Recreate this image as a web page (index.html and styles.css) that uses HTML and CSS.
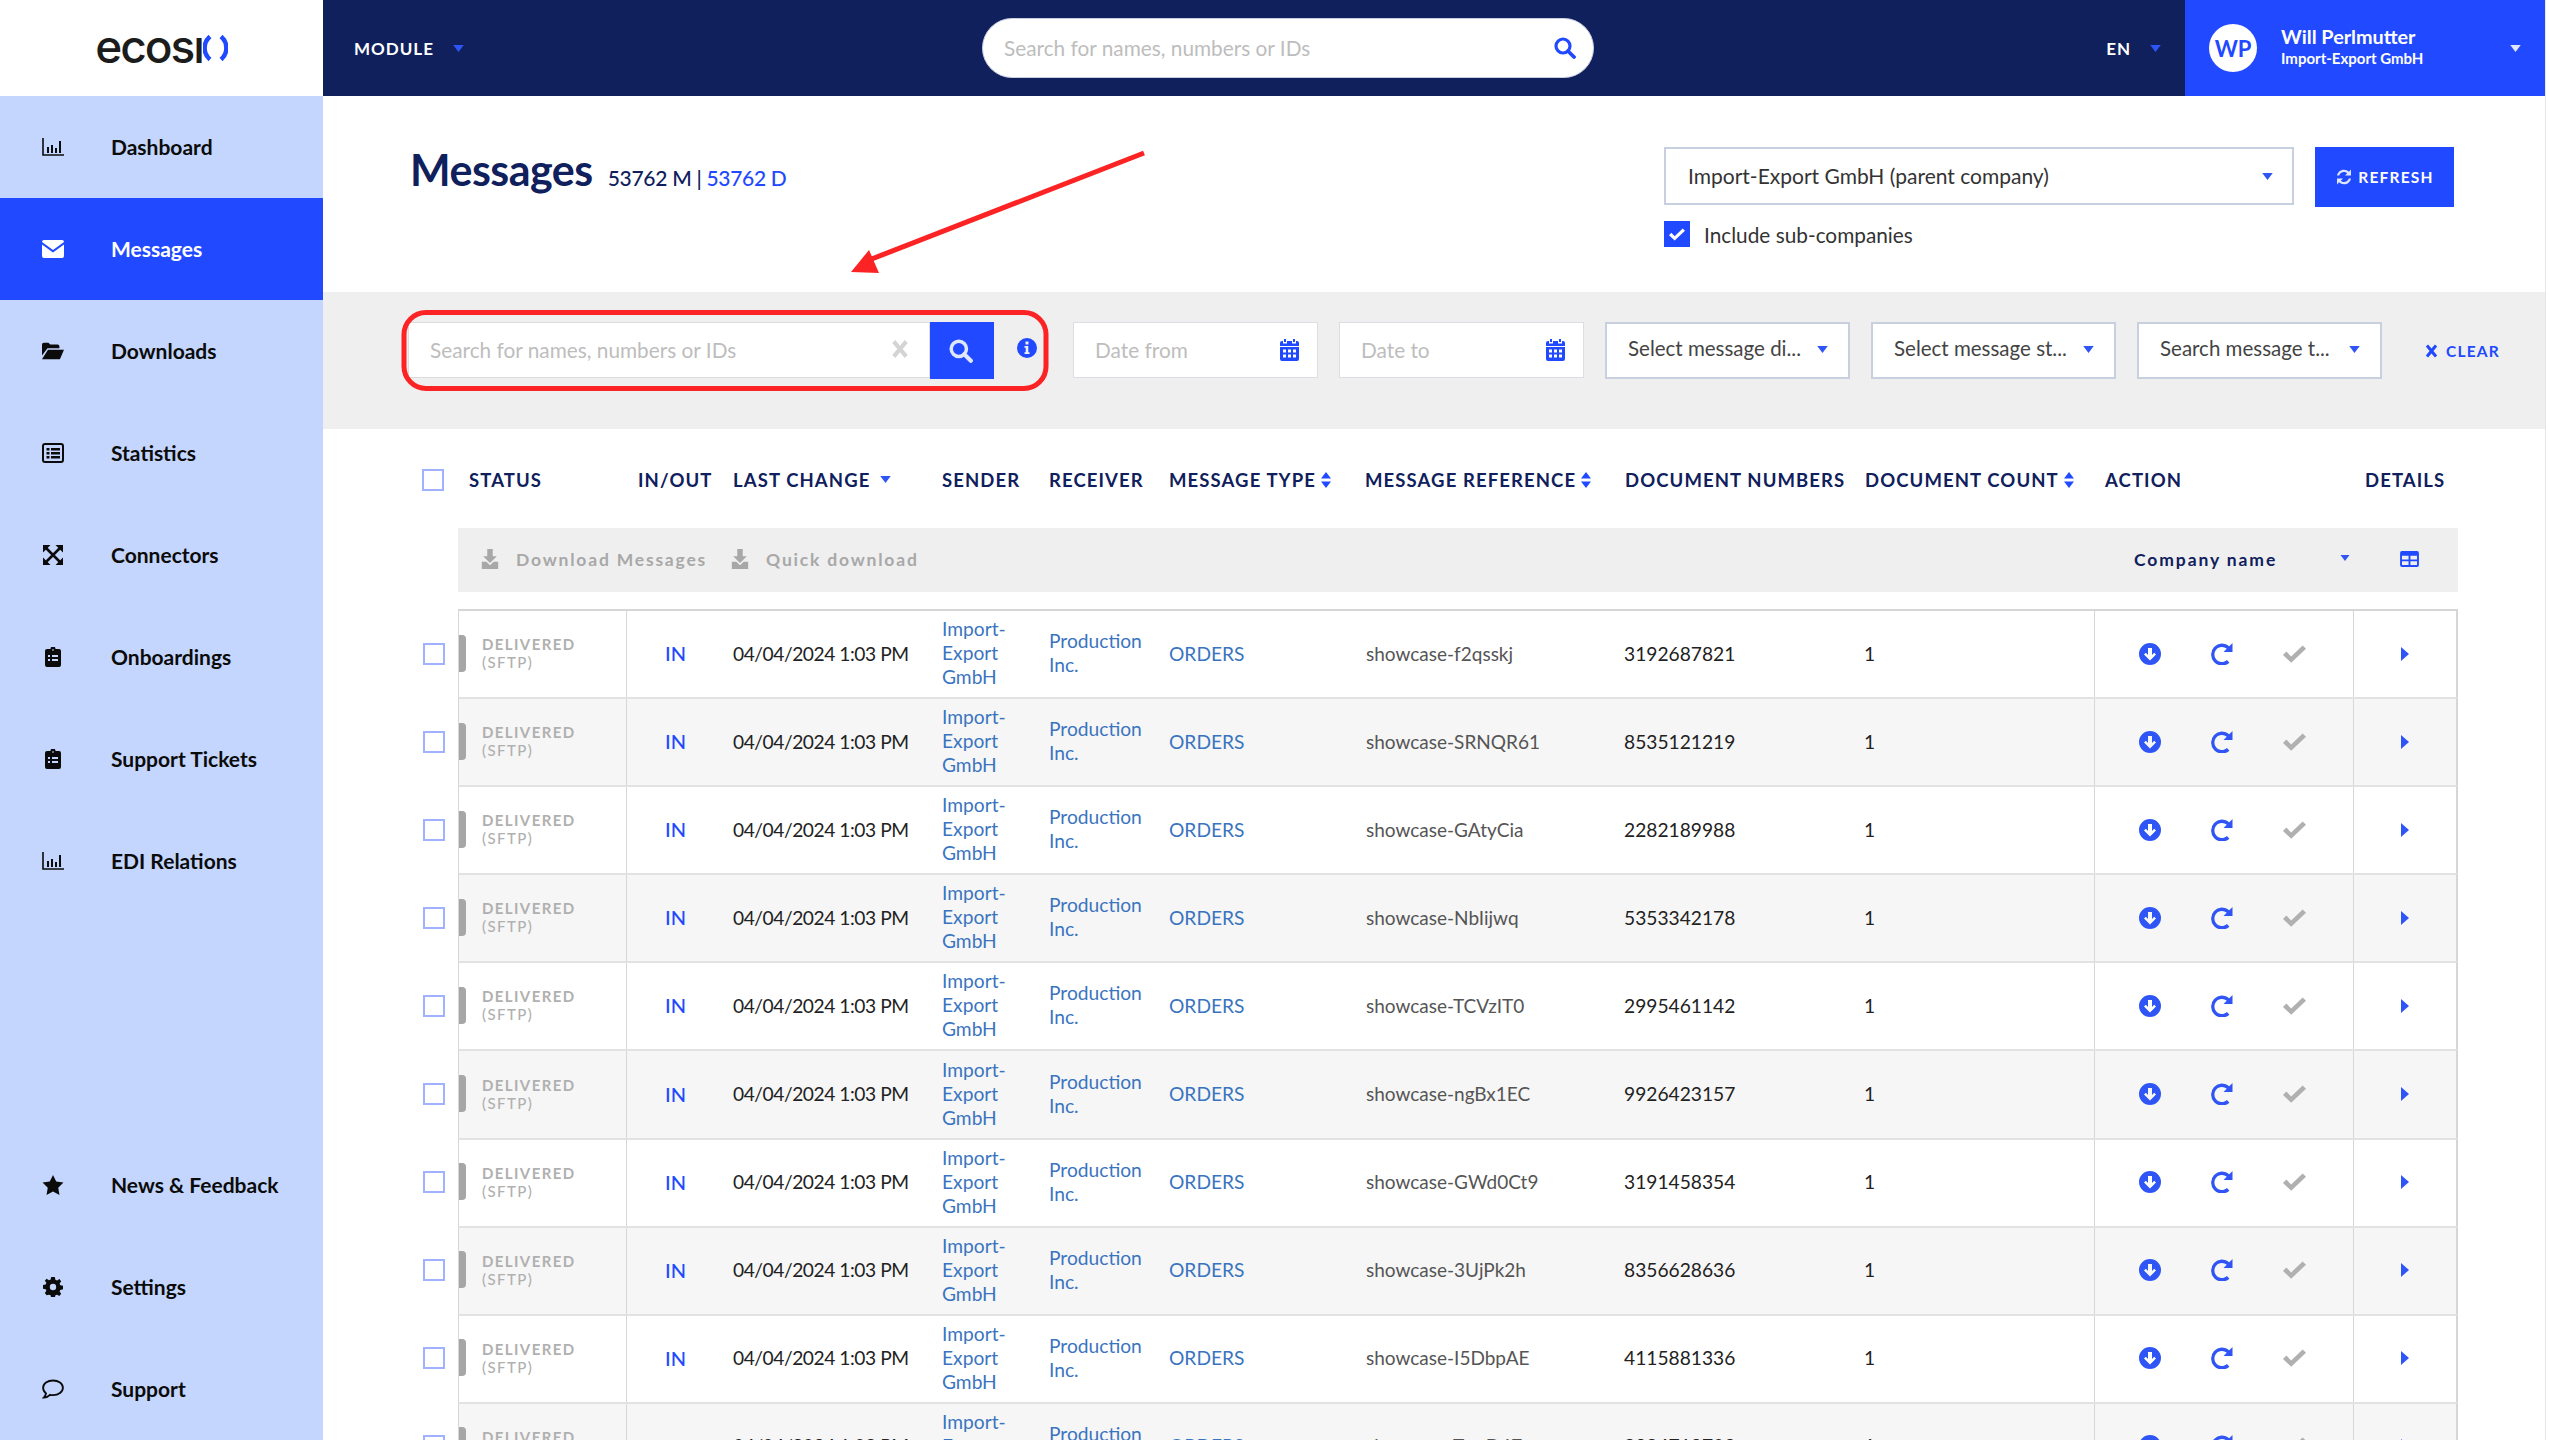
FILE: index.html
```html
<!DOCTYPE html>
<html lang="en">
<head>
<meta charset="utf-8">
<title>Messages</title>
<link rel="stylesheet" href="styles.css">
</head>
<body>
<svg class="defs" width="0" height="0" aria-hidden="true">
  <defs>
    <symbol id="i-chart" viewBox="0 0 22 18"><path d="M1 0v17h21" fill="none" stroke="currentColor" stroke-width="1.6"/><path d="M5 9h2v6H5zM9 7h2v8H9zM13 10h2v5h-2zM17 3h2v12h-2z" fill="currentColor"/></symbol>
    <symbol id="i-mail" viewBox="0 0 22 18"><path d="M2 0h18a2 2 0 0 1 2 2L11 10 0 2a2 2 0 0 1 2-2z" fill="currentColor"/><path d="M0 4.500 11 12.500 22 4.500V16a2 2 0 0 1-2 2H2a2 2 0 0 1-2-2z" fill="currentColor"/></symbol>
    <symbol id="i-folder" viewBox="0 0 24 18"><path d="M0 2a2 2 0 0 1 2-2h5l2 2h8a2 2 0 0 1 2 2v2H6L0 14z" fill="currentColor"/><path d="M6.500 7.500H24l-4.500 10.500H0z" fill="currentColor"/></symbol>
    <symbol id="i-list" viewBox="0 0 22 20"><rect x="1" y="1" width="20" height="18" rx="2" fill="none" stroke="currentColor" stroke-width="2"/><path d="M4.500 5h3v2.500h-3zM9 5h9v2.500H9zM4.500 9h3v2.500h-3zM9 9h9v2.500H9zM4.500 13h3v2.500h-3zM9 13h9v2.500H9z" fill="currentColor"/></symbol>
    <symbol id="i-expand" viewBox="0 0 20 20"><path d="M0 0h7.500L0 7.500zM20 0v7.500L12.500 0zM0 20v-7.500L7.500 20zM20 20h-7.500L20 12.500z" fill="currentColor"/><path d="m3 3 14 14M17 3 3 17" fill="none" stroke="currentColor" stroke-width="2.600"/></symbol>
    <symbol id="i-clip" viewBox="0 0 16 20"><path fill-rule="evenodd" d="M5.500 2a2.500 2.500 0 0 1 5 0H14a2 2 0 0 1 2 2v14a2 2 0 0 1-2 2H2a2 2 0 0 1-2-2V4a2 2 0 0 1 2-2zM3 8v2h2V8zm4 0v2h6V8zm-4 4v2h2v-2zm4 0v2h6v-2zM7 2.500v1h2v-1z" fill="currentColor"/></symbol>
    <symbol id="i-star" viewBox="0 0 22 21"><path d="m11 0 3.400 6.900 7.600 1.100-5.500 5.400 1.300 7.600L11 17.400 4.200 21l1.300-7.600L0 8l7.600-1.100z" fill="currentColor"/></symbol>
    <symbol id="i-gear" viewBox="0 0 22 22"><path fill-rule="evenodd" d="M9 0h4l.6 3 1.900.8L18 2.200 20 4.800l-1.700 2.400.7 1.800 3 .6v4l-3 .6-.7 1.800 1.700 2.400-2 2.600-2.500-1.600-1.900.8-.6 3H9l-.6-3-1.900-.8L4 20.200 2 17.600l1.700-2.400-.7-1.800-3-.6v-4l3-.6.7-1.800L2 4l2-2.200 2.500 1.700 1.900-.8zM11 7.500a3.500 3.500 0 1 0 0 7 3.500 3.500 0 0 0 0-7z" fill="currentColor"/></symbol>
    <symbol id="i-chat" viewBox="0 0 24 21"><path d="M12 1.200c6 0 10.800 3.500 10.800 8s-4.800 8-10.800 8c-1.200 0-2.300-.1-3.300-.4C7 18.600 4.700 19.700 2 19.800c1.300-1.300 2.200-3 2.400-4.500C2.400 13.800 1.200 11.700 1.200 9.200c0-4.500 4.800-8 10.800-8z" fill="none" stroke="currentColor" stroke-width="2"/></symbol>
    <symbol id="i-search" viewBox="0 0 22 22"><circle cx="9" cy="9" r="7" fill="none" stroke="currentColor" stroke-width="3.200"/><path d="m14 14 6 6" fill="none" stroke="currentColor" stroke-width="3.800" stroke-linecap="round"/></symbol>
    <symbol id="i-times" viewBox="0 0 16 18"><path d="M1 3.500 3.800 1 8 6l4.200-5L15 3.500 10.400 9 15 14.500 12.200 17 8 12l-4.200 5L1 14.500 5.600 9z" fill="currentColor"/></symbol>
    <symbol id="i-info" viewBox="0 0 20 20"><path fill-rule="evenodd" d="M10 0a10 10 0 1 1 0 20 10 10 0 0 1 0-20zM8.500 3.500v3h3v-3zM7.500 8v1.800h1.200v4.400H7.500V16h5v-1.800h-1.200V8z" fill="currentColor"/></symbol>
    <symbol id="i-cal" viewBox="0 0 19 22"><path fill-rule="evenodd" d="M4 0h2v3H4zM13 0h2v3h-2zM2 2h1v2.500h4V2h5v2.500h4V2h1a2 2 0 0 1 2 2v3H0V4a2 2 0 0 1 2-2zM0 8h19v12a2 2 0 0 1-2 2H2a2 2 0 0 1-2-2zm3 2.500v3h3v-3zm5 0v3h3v-3zm5 0v3h3v-3zm-10 5v3h3v-3zm5 0v3h3v-3zm5 0v3h3v-3z" fill="currentColor"/></symbol>
    <symbol id="i-refresh" viewBox="0 0 18 20"><path d="M2 8.500C2.700 5 5.500 2.700 9 2.700c2 0 3.700.8 5 2L16 2.500v6h-6l2.200-2.200c-.9-.8-2-1.300-3.200-1.300-2.300 0-4.200 1.400-4.800 3.500z" fill="currentColor"/><path d="M16 11.500c-.7 3.500-3.500 5.800-7 5.800-2 0-3.700-.8-5-2L2 17.500v-6h6l-2.200 2.200c.9.800 2 1.300 3.200 1.300 2.300 0 4.200-1.400 4.800-3.500z" fill="currentColor"/></symbol>
    <symbol id="i-dl" viewBox="0 0 18 22"><path d="M6 0h6v8h4.500L9 15.500 1.500 8H6z" fill="currentColor"/><path d="M0 14h5l4 4 4-4h5v8H0z" fill="currentColor"/></symbol>
    <symbol id="i-grid" viewBox="0 0 20 17"><path fill-rule="evenodd" d="M2 0h16a2 2 0 0 1 2 2v13a2 2 0 0 1-2 2H2a2 2 0 0 1-2-2V2a2 2 0 0 1 2-2zm0 5v4h7V5zm9 0v4h7V5zM2 11v4h7v-4zm9 0v4h7v-4z" fill="currentColor"/></symbol>
    <symbol id="i-down" viewBox="0 0 22 22"><path fill-rule="evenodd" d="M11 0a11 11 0 1 1 0 22 11 11 0 0 1 0-22zM9 5v7L6.800 9.800 5 11.600l6 6 6-6-1.800-1.800L13 12V5z" fill="currentColor"/></symbol>
    <symbol id="i-redo" viewBox="0 0 22 22"><path d="M21.500 0v9h-9l3.300-3.300A7.700 7.700 0 0 0 11 4a7.500 7.500 0 1 0 5 13l2.400 2.700A11 11 0 1 1 18.300 3.200z" fill="currentColor"/></symbol>
    <symbol id="i-check" viewBox="0 0 24 18"><path d="M0 10 3.500 6.500 8.500 11.500 20.500 0 24 3.500 8.500 18z" fill="currentColor"/></symbol>
    <symbol id="i-sort" viewBox="0 0 10 16"><path d="M5 0 10 6.500H0zM0 9.500h10L5 16z" fill="currentColor"/></symbol>
    <symbol id="i-caret" viewBox="0 0 12 8"><path d="M0 0h12L6 8z" fill="currentColor"/></symbol>
    <symbol id="i-right" viewBox="0 0 8 14"><path d="M0 0 8 7 0 14z" fill="currentColor"/></symbol>
  </defs>
</svg>

<div class="app">
  <aside class="sidebar">
    <div class="logo"><span class="logo-word">ecosı</span><svg class="logo-brace" viewBox="0 0 25 26"><path d="M7 1.500A15 15 0 0 0 7 24.500M18 1.500A15 15 0 0 1 18 24.500" fill="none" stroke="currentColor" stroke-width="4.500"/></svg></div>
    <nav class="nav">
      <div class="nav-group">
        <a class="nav-item"><svg class="nav-ico"><use href="#i-chart"/></svg>Dashboard</a>
        <a class="nav-item active"><svg class="nav-ico"><use href="#i-mail"/></svg>Messages</a>
        <a class="nav-item"><svg class="nav-ico"><use href="#i-folder"/></svg>Downloads</a>
        <a class="nav-item"><svg class="nav-ico"><use href="#i-list"/></svg>Statistics</a>
        <a class="nav-item"><svg class="nav-ico"><use href="#i-expand"/></svg>Connectors</a>
        <a class="nav-item"><svg class="nav-ico"><use href="#i-clip"/></svg>Onboardings</a>
        <a class="nav-item"><svg class="nav-ico"><use href="#i-clip"/></svg>Support Tickets</a>
        <a class="nav-item"><svg class="nav-ico"><use href="#i-chart"/></svg>EDI Relations</a>
      </div>
      <div class="nav-group">
        <a class="nav-item"><svg class="nav-ico"><use href="#i-star"/></svg>News &amp; Feedback</a>
        <a class="nav-item"><svg class="nav-ico"><use href="#i-gear"/></svg>Settings</a>
        <a class="nav-item"><svg class="nav-ico"><use href="#i-chat"/></svg>Support</a>
      </div>
    </nav>
  </aside>

  <div class="main">
    <header class="topbar">
      <div class="module">MODULE<svg class="caret caret-gap"><use href="#i-caret"/></svg></div>
      <div class="top-search"><span class="placeholder">Search for names, numbers or IDs</span><svg class="top-search-ico"><use href="#i-search"/></svg></div>
      <div class="lang">EN<svg class="caret lang-caret"><use href="#i-caret"/></svg></div>
      <div class="user">
        <div class="avatar">WP</div>
        <div class="user-text"><div class="user-name">Will Perlmutter</div><div class="user-org">Import-Export GmbH</div></div>
        <svg class="caret user-caret"><use href="#i-caret"/></svg>
      </div>
    </header>

    <section class="title-row">
      <div class="title-left">
        <h1 class="title">Messages</h1>
        <div class="counts">53762 M | <span class="blue-strong">53762 D</span></div>
      </div>
      <div class="company">
        <div class="company-line">
          <div class="company-select"><span class="lift-sm">Import-Export GmbH (parent company)</span><svg class="caret"><use href="#i-caret"/></svg></div>
          <button class="refresh"><svg class="refresh-ico"><use href="#i-refresh"/></svg>REFRESH</button>
        </div>
        <label class="include"><span class="checked"><svg class="checked-ico"><use href="#i-check"/></svg></span>Include sub-companies</label>
      </div>
    </section>

    <section class="filters">
      <div class="search-box">
        <span class="placeholder">Search for names, numbers or IDs</span>
        <svg class="search-clear"><use href="#i-times"/></svg>
      </div>
      <button class="search-btn"><svg class="search-btn-ico"><use href="#i-search"/></svg></button>
      <svg class="info-ico"><use href="#i-info"/></svg>
      <div class="date"><span class="placeholder">Date from</span><svg class="cal-ico"><use href="#i-cal"/></svg></div>
      <div class="date"><span class="placeholder">Date to</span><svg class="cal-ico"><use href="#i-cal"/></svg></div>
      <div class="dropdown"><span class="lift">Select message di...</span><svg class="caret"><use href="#i-caret"/></svg></div>
      <div class="dropdown"><span class="lift">Select message st...</span><svg class="caret"><use href="#i-caret"/></svg></div>
      <div class="dropdown"><span class="lift">Search message t...</span><svg class="caret"><use href="#i-caret"/></svg></div>
      <a class="clear"><svg class="clear-ico"><use href="#i-times"/></svg>CLEAR</a>
    </section>

    <section class="content">
      <div class="head-row">
        <span class="chk head-chk"></span>
        <div class="hc hc-status">STATUS</div>
        <div class="hc hc-inout">IN/OUT</div>
        <div class="hc hc-change">LAST CHANGE<svg class="caret sort-gap"><use href="#i-caret"/></svg></div>
        <div class="hc hc-sender">SENDER</div>
        <div class="hc hc-receiver">RECEIVER</div>
        <div class="hc hc-type">MESSAGE TYPE<svg class="sort"><use href="#i-sort"/></svg></div>
        <div class="hc hc-ref">MESSAGE REFERENCE<svg class="sort"><use href="#i-sort"/></svg></div>
        <div class="hc hc-docs">DOCUMENT NUMBERS</div>
        <div class="hc hc-count">DOCUMENT COUNT<svg class="sort"><use href="#i-sort"/></svg></div>
        <div class="hc hc-action">ACTION</div>
        <div class="hc hc-details">DETAILS</div>
      </div>
      <div class="toolbar">
        <a class="tool"><svg class="tool-ico"><use href="#i-dl"/></svg>Download Messages</a>
        <a class="tool"><svg class="tool-ico"><use href="#i-dl"/></svg>Quick download</a>
        <div class="tool-right">
          <span class="company-name">Company name</span>
          <svg class="caret"><use href="#i-caret"/></svg>
          <svg class="grid-ico"><use href="#i-grid"/></svg>
        </div>
      </div>
      <div class="rows" id="rows"></div>
    </section>
  </div>
</div>

<div class="rail"></div>

<svg class="annot" width="2549" height="1440" viewBox="0 0 2549 1440" aria-hidden="true">
  <rect x="404" y="312.500" width="642" height="76" rx="22" fill="none" stroke="#fb2323" stroke-width="5"/>
  <path d="M1144 153 864 262" fill="none" stroke="#fb2323" stroke-width="5"/>
  <path d="M851 272 869 250 879 273z" fill="#fb2323"/>
</svg>

<script src="app.js"></script>
</body>
</html>
```

FILE: styles.css
```css
* { box-sizing: border-box; }
html, body { margin: 0; height: 100%; overflow: hidden; background: #fff; }
body { font-family: Lato, "Liberation Sans", sans-serif; color: #222; width: 2549px; height: 1440px; position: relative; }
.defs { position: absolute; }
a { color: inherit; text-decoration: none; }
button { font-family: inherit; border: 0; padding: 0; cursor: pointer; }
svg { display: block; flex: none; }
.lift { margin-top: -3px; }
.lift-sm { margin-top: -1px; }

.app { display: flex; width: 2545px; height: 1440px; }
.rail { position: absolute; top: 0; right: 0; width: 4px; height: 1440px; background: #fff; border-left: 1px solid #e6e6e6; }
.annot { position: absolute; top: 0; left: 0; pointer-events: none; }

/* sidebar */
.sidebar { width: 323px; flex: none; display: flex; flex-direction: column; background: #c4d6fd; }
.logo { height: 96px; background: #fff; display: flex; align-items: center; justify-content: center; gap: 0; }
.logo-word { color: #1c1c1c; font-family: Inter, sans-serif; font-size: 46px; font-weight: 500; line-height: 1; letter-spacing: -2px; margin-top: -5px; }
.logo-brace { width: 25px; height: 26px; color: #2149ff; }
.nav { flex: 1; display: flex; flex-direction: column; justify-content: space-between; }
.nav-item { height: 102px; display: flex; align-items: center; font-size: 21px; font-weight: 700; color: #0b0b0b; padding: 0 0 2px 42px; }
.nav-item.active { background: #2149ff; color: #fff; }
.nav-ico { width: 22px; height: 20px; margin: 2px 47px 0 0; }

/* top bar */
.main { flex: 1; min-width: 0; display: flex; flex-direction: column; }
.topbar { height: 96px; flex: none; background: #0f205c; display: flex; align-items: center; padding-left: 31px; position: relative; }
.module { display: flex; align-items: center; color: #fff; font-size: 17px; font-weight: 700; letter-spacing: 1px; width: 628px; flex: none; }
.caret { width: 11px; height: 7px; color: #2f55f5; flex: none; }
.caret-gap { margin-left: 19px; }
.top-search { width: 612px; height: 60px; flex: none; background: #fff; border: 1px solid #c8d0e0; border-radius: 30px; display: flex; align-items: center; justify-content: space-between; padding: 0 17px 0 21px; }
.placeholder { color: #bdbdbd; font-size: 20.800px; margin-top: -2px; }
.top-search-ico { width: 22px; height: 22px; color: #2149ff; }
.lang { display: flex; align-items: center; color: #fff; font-size: 17px; font-weight: 700; letter-spacing: 1px; margin-left: auto; margin-right: 24px; }
.lang-caret { margin-left: 19px; }
.user { width: 360px; height: 96px; flex: none; background: #2149ff; display: flex; align-items: center; color: #fff; padding-left: 24px; }
.avatar { width: 48px; height: 48px; border-radius: 50%; background: #fff; color: #2149ff; display: flex; align-items: center; justify-content: center; font-size: 22px; font-weight: 700; flex: none; }
.user-text { margin: -5px 0 0 24px; flex: 1; }
.user-name { font-size: 19.800px; font-weight: 700; line-height: 24px; }
.user-org { font-size: 15px; font-weight: 700; line-height: 20px; }
.user-caret { color: #dfe6ff; margin-right: 24px; }

/* title row */
.title-row { height: 196px; flex: none; display: flex; justify-content: space-between; padding: 49px 91px 0 87px; }
.title-left { display: flex; align-items: baseline; height: 50px; }
.title { margin: 0; font-size: 43px; font-weight: 700; color: #0f205c; line-height: 50px; letter-spacing: -.5px; }
.counts { margin-left: 15px; font-size: 21px; font-weight: 500; letter-spacing: -.3px; color: #0f205c; }
.blue-strong { color: #2149ff; }
.company-line { display: flex; align-items: flex-start; gap: 21px; margin-top: 2px; }
.company-select { width: 630px; height: 58px; border: 2px solid #c8d0e0; display: flex; align-items: center; justify-content: space-between; padding: 0 19px 0 22px; font-size: 21px; color: #333; }
.refresh { width: 139px; height: 60px; background: #2149ff; color: #fff; font-size: 15.500px; font-weight: 700; letter-spacing: 1.200px; display: flex; align-items: center; justify-content: center; gap: 5px; }
.refresh-ico { width: 18px; height: 22px; color: #dfe6ff; }
.include { display: flex; align-items: center; margin-top: 14px; font-size: 20.800px; color: #333; }
.checked { width: 26px; height: 26px; background: #2149ff; display: flex; align-items: center; justify-content: center; margin-right: 14px; }
.checked-ico { width: 16px; height: 13px; color: #fff; }

/* filter band */
.filters { height: 137px; flex: none; background: #efefef; display: flex; align-items: flex-start; padding: 30px 0 0 85px; }
.search-box { width: 522px; height: 56px; background: #fff; border: 1px solid #dcdcdc; display: flex; align-items: center; justify-content: space-between; padding: 0 20px 0 21px; }
.search-clear { width: 18px; height: 20px; color: #d4d4d4; margin-top: -3px; }
.search-btn { width: 64px; height: 57px; background: #2149ff; color: #dfe6ff; display: flex; align-items: center; justify-content: center; padding-right: 2px; }
.search-btn-ico { width: 24px; height: 24px; }
.info-ico { width: 20px; height: 20px; color: #2149ff; margin: 16px 36px 0 23px; }
.date { width: 245px; height: 56px; background: #fff; border: 1px solid #dcdee6; display: flex; align-items: center; justify-content: space-between; padding: 0 18px 0 21px; margin-right: 21px; }
.cal-ico { width: 19px; height: 22px; color: #2149ff; }
.dropdown { height: 57px; width: 245px; background: #fff; border: 2px solid #c8d0e0; display: flex; align-items: center; justify-content: space-between; padding: 0 20px 2px 21px; margin-right: 21px; font-size: 20.500px; color: #444; }
.clear { display: flex; align-items: center; gap: 8px; margin: 20px 0 0 22px; color: #2149ff; font-size: 15.500px; font-weight: 700; letter-spacing: 1.200px; }
.clear-ico { width: 13px; height: 16px; }

/* table */
.content { flex: 1; min-height: 0; overflow: hidden; padding-left: 99px; }
.head-row { height: 99px; display: flex; align-items: center; padding-top: 2px; }
.chk { display: block; width: 22px; height: 22px; background: #fff; border: 2px solid #9fb1ff; flex: none; }
.head-chk { margin-right: 25px; }
.hc { flex: none; display: flex; align-items: center; font-size: 18.500px; font-weight: 700; letter-spacing: 1.100px; color: #0f205c; white-space: nowrap; }
.hc-status { width: 169px; }
.hc-inout { width: 95px; }
.hc-change { width: 209px; }
.hc-sender { width: 107px; }
.hc-receiver { width: 120px; }
.hc-type { width: 196px; }
.hc-ref { width: 260px; }
.hc-docs { width: 240px; }
.hc-count { width: 240px; }
.hc-action { width: 260px; }
.sort-gap { margin-left: 10px; }
.sort { width: 10px; height: 16px; color: #2149ff; margin-left: 5px; }

.toolbar { width: 2000px; height: 64px; margin-left: 36px; background: #efefef; display: flex; align-items: center; padding: 0 0 2px 23px; }
.tool { display: flex; align-items: center; color: #a8a8a8; font-size: 17.500px; font-weight: 700; letter-spacing: 1.800px; margin-right: 24px; }
.tool-ico { width: 18px; height: 20px; margin-right: 17px; }
.tool-right { margin-left: auto; display: flex; align-items: center; }
.company-name { font-size: 17.500px; font-weight: 700; letter-spacing: 1.900px; color: #0f205c; width: 206px; }
.tool-right .caret { width: 10px; height: 6px; margin-top: -2px; }
.grid-ico { width: 19px; height: 16px; color: #2149ff; margin: 0 39px 0 50px; }

.rows { margin-top: 17px; }
.row { height: 88.100px; display: flex; align-items: stretch; }
.cell-chk { width: 36px; flex: none; display: flex; align-items: center; padding: 1px 0 0 1px; }
.cells { display: flex; width: 2000px; flex: none; border-top: 2px solid #e2e2e2; border-left: 1px solid #d6d6d6; border-right: 2px solid #d6d6d6; font-size: 19.200px; color: #222; }
.row:first-child .cells { border-top-color: #d6d6d6; }
.row.alt .cells { background: #f6f6f6; }
.c { flex: none; display: flex; align-items: center; padding-bottom: 2px; }
.c-status { width: 168px; border-right: 1px solid #d6d6d6; }
.status-bar { width: 7px; height: 37px; background: #a6a6a6; border-radius: 0 4px 4px 0; margin-right: 16px; flex: none; }
.status-text { color: #b0b0b0; font-size: 15px; font-weight: 700; letter-spacing: 1.400px; line-height: 18px; }
.status-sub { font-weight: 500; }
.c-in { width: 106px; justify-content: center; color: #2149ff; font-weight: 500; font-size: 20px; padding-right: 9px; }
.c-date { width: 209px; white-space: nowrap; letter-spacing: -.45px; }
.c-sender { width: 107px; color: #3a74c0; line-height: 24px; }
.c-receiver { width: 120px; color: #3a74c0; line-height: 24px; }
.c-type { width: 197px; color: #3a74c0; }
.c-ref { width: 258px; color: #555; font-size: 19px; }
.c-docs { width: 240px; }
.c-count { width: 230px; }
.c-action { width: 260px; border-left: 1px solid #d6d6d6; border-right: 1px solid #d6d6d6; padding-left: 44px; gap: 50px; }
.act { width: 22px; height: 22px; color: #2f55f5; margin-top: 1px; }
.act-check { width: 23px; height: 18px; color: #b0b0b0; margin-top: 1px; }
.c-details { flex: 1; padding-left: 47px; }
.detail-ico { width: 8px; height: 14px; color: #2f55f5; margin-top: 1px; }
```

FILE: app.js
```js
var refs = [
  ['f2qsskj', '3192687821'], ['SRNQR61', '8535121219'], ['GAtyCia', '2282189988'],
  ['NbIijwq', '5353342178'], ['TCVzIT0', '2995461142'], ['ngBx1EC', '9926423157'],
  ['GWd0Ct9', '3191458354'], ['3UjPk2h', '8356628636'], ['I5DbpAE', '4115881336'],
  ['TwzD67', '3984719703']
];
var html = '';
refs.forEach(function (r, i) {
  html += '<div class="row' + (i % 2 ? ' alt' : '') + '">' +
    '<div class="cell-chk"><span class="chk"></span></div>' +
    '<div class="cells">' +
    '<div class="c c-status"><span class="status-bar"></span><div class="status-text">DELIVERED<br><span class="status-sub">(SFTP)</span></div></div>' +
    '<div class="c c-in">IN</div>' +
    '<div class="c c-date">04/04/2024 1:03 PM</div>' +
    '<div class="c c-sender"><span>Import-<br>Export<br>GmbH</span></div>' +
    '<div class="c c-receiver"><span>Production<br>Inc.</span></div>' +
    '<div class="c c-type">ORDERS</div>' +
    '<div class="c c-ref">showcase-' + r[0] + '</div>' +
    '<div class="c c-docs">' + r[1] + '</div>' +
    '<div class="c c-count">1</div>' +
    '<div class="c c-action"><svg class="act"><use href="#i-down"/></svg><svg class="act"><use href="#i-redo"/></svg><svg class="act-check"><use href="#i-check"/></svg></div>' +
    '<div class="c c-details"><svg class="detail-ico"><use href="#i-right"/></svg></div>' +
    '</div></div>';
});
document.getElementById('rows').innerHTML = html;
```
